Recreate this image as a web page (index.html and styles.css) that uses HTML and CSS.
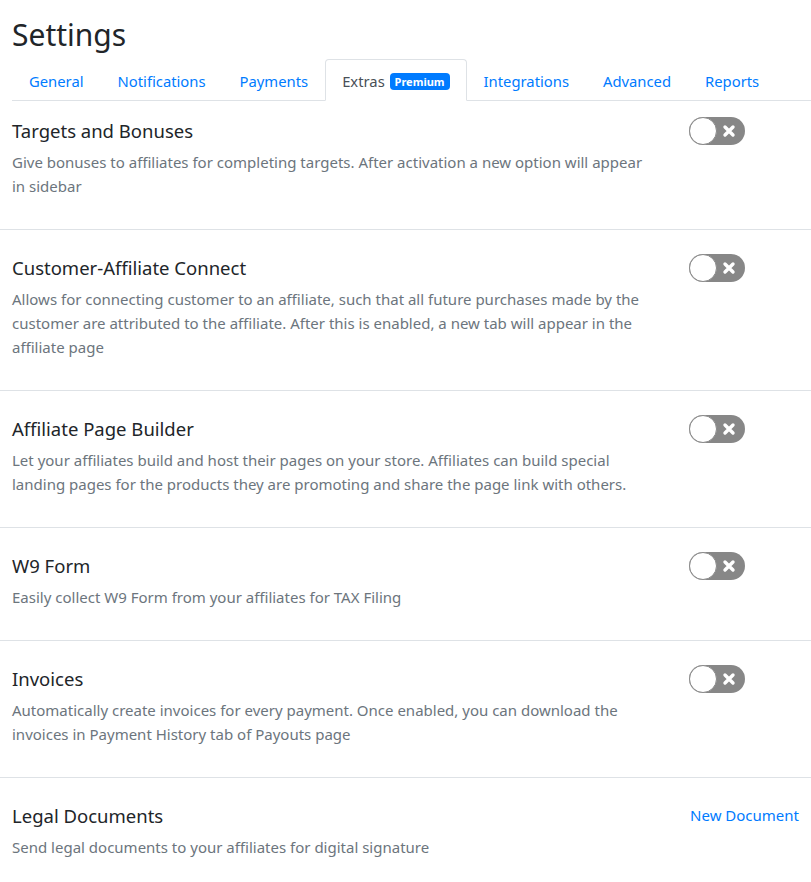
FILE: index.html
```html
<!DOCTYPE html>
<html lang="en">
<head>
<meta charset="utf-8">
<title>Settings</title>
<link rel="stylesheet" href="styles.css">
</head>
<body>
<div class="page">
  <h1 class="page-title">Settings</h1>
  <ul class="tabs">
    <li><a class="tab">General</a></li>
    <li><a class="tab">Notifications</a></li>
    <li><a class="tab">Payments</a></li>
    <li><a class="tab active">Extras <span class="badge">Premium</span></a></li>
    <li><a class="tab">Integrations</a></li>
    <li><a class="tab">Advanced</a></li>
    <li><a class="tab">Reports</a></li>
  </ul>
</div>

<div class="list">
  <div class="item first">
    <div class="info">
      <h2 class="item-title">Targets and Bonuses</h2>
      <p class="item-desc">Give bonuses to affiliates for completing targets. After activation a new option will appear in sidebar</p>
    </div>
    <div class="action"><span class="toggle"><span class="knob"></span><svg class="x" viewBox="0 0 14 14" width="14" height="14"><path d="M3 3L11 11M11 3L3 11" stroke="#fff" stroke-width="3.4" stroke-linecap="round"/></svg></span></div>
  </div>
  <div class="item">
    <div class="info">
      <h2 class="item-title">Customer-Affiliate Connect</h2>
      <p class="item-desc">Allows for connecting customer to an affiliate, such that all future purchases made by the customer are attributed to the affiliate. After this is enabled, a new tab will appear in the affiliate page</p>
    </div>
    <div class="action"><span class="toggle"><span class="knob"></span><svg class="x" viewBox="0 0 14 14" width="14" height="14"><path d="M3 3L11 11M11 3L3 11" stroke="#fff" stroke-width="3.4" stroke-linecap="round"/></svg></span></div>
  </div>
  <div class="item">
    <div class="info">
      <h2 class="item-title">Affiliate Page Builder</h2>
      <p class="item-desc">Let your affiliates build and host their pages on your store. Affiliates can build special landing pages for the products they are promoting and share the page link with others.</p>
    </div>
    <div class="action"><span class="toggle"><span class="knob"></span><svg class="x" viewBox="0 0 14 14" width="14" height="14"><path d="M3 3L11 11M11 3L3 11" stroke="#fff" stroke-width="3.4" stroke-linecap="round"/></svg></span></div>
  </div>
  <div class="item">
    <div class="info">
      <h2 class="item-title">W9 Form</h2>
      <p class="item-desc">Easily collect W9 Form from your affiliates for TAX Filing</p>
    </div>
    <div class="action"><span class="toggle"><span class="knob"></span><svg class="x" viewBox="0 0 14 14" width="14" height="14"><path d="M3 3L11 11M11 3L3 11" stroke="#fff" stroke-width="3.4" stroke-linecap="round"/></svg></span></div>
  </div>
  <div class="item">
    <div class="info">
      <h2 class="item-title">Invoices</h2>
      <p class="item-desc">Automatically create invoices for every payment. Once enabled, you can download the invoices in Payment History tab of Payouts page</p>
    </div>
    <div class="action"><span class="toggle"><span class="knob"></span><svg class="x" viewBox="0 0 14 14" width="14" height="14"><path d="M3 3L11 11M11 3L3 11" stroke="#fff" stroke-width="3.4" stroke-linecap="round"/></svg></span></div>
  </div>
  <div class="item last">
    <div class="info">
      <h2 class="item-title">Legal Documents</h2>
      <p class="item-desc">Send legal documents to your affiliates for digital signature</p>
    </div>
    <div class="action end"><a class="link">New Document</a></div>
  </div>
</div>
</body>
</html>
```

FILE: styles.css
```css
* { box-sizing: border-box; }
html, body { margin: 0; padding: 0; background: #fff; }
body {
  font-family: "Noto Sans", "Open Sans", "Liberation Sans", sans-serif;
  color: #212529;
  font-size: 15px;
  line-height: 24px;
}
.page { padding: 0 0 0 12px; }
.page-title {
  margin: 0;
  padding-top: 13px;
  font-size: 30px;
  line-height: 44px;
  font-weight: 400;
  height: 59px;
}
.tabs {
  list-style: none;
  margin: 0;
  padding: 0;
  display: flex;
  border-bottom: 1px solid #dee2e6;
}
.tabs li { margin-bottom: -1px; }
.tab {
  display: block;
  padding: 9px 16px 7px;
  font-size: 14.8px;
  color: #007bff;
  border: 1px solid transparent;
  border-top-left-radius: 4px;
  border-top-right-radius: 4px;
  line-height: 24px;
  white-space: nowrap;
}
.tab.active {
  color: #495057;
  border-color: #dee2e6 #dee2e6 #fff;
  background: #fff;
}
.badge {
  display: inline-block;
  background: #007bff;
  color: #fff;
  font-size: 11px;
  font-weight: 700;
  line-height: 17px;
  padding: 0 5px;
  border-radius: 4px;
  vertical-align: 1px;
  margin-left: 1px;
}
.item {
  display: flex;
  padding: 26px 12px 31px;
  border-bottom: 1px solid #dee2e6;
}
.item.first { padding-top: 18px; }
.item.last { border-bottom: none; }
.info { flex: 1; max-width: 640px; }
.item-title {
  margin: 0 0 7px;
  font-size: 18.5px;
  line-height: 24px;
  font-weight: 400;
  color: #212529;
}
.item-desc {
  margin: 0;
  color: #6c757d;
  font-size: 15px;
  line-height: 24px;
}
.action {
  margin-left: auto;
  width: 110px;
  display: flex;
  justify-content: flex-start;
}
.action.end { justify-content: flex-end; }
.toggle {
  position: relative;
  display: block;
  width: 56px;
  height: 28px;
  border-radius: 14px;
  background: #878787;
  margin-top: -2px;
}
.knob {
  position: absolute;
  left: 0;
  top: 0;
  width: 28px;
  height: 28px;
  border-radius: 50%;
  background: #fff;
  border: 1.5px solid #8a8a8a;
}
.x {
  position: absolute;
  left: 33px;
  top: 7px;
}
.link {
  color: #007bff;
  font-size: 15px;
  line-height: 24px;
  margin-top: -1px;
}
```
